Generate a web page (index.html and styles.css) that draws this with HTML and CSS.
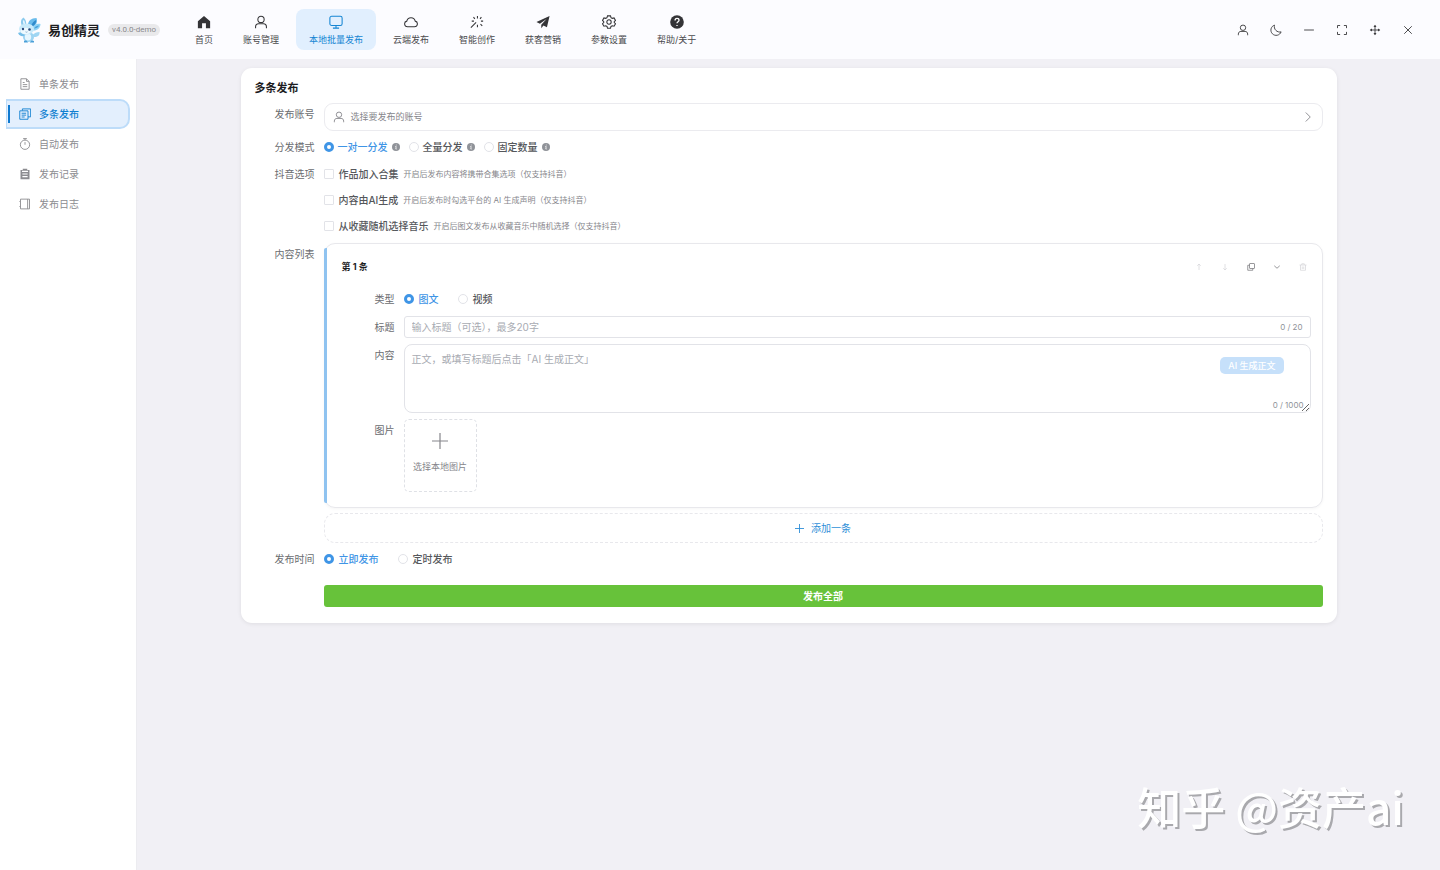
FILE: index.html
```html
<!DOCTYPE html>
<html lang="zh-CN">
<head>
  <meta charset="UTF-8">
  <meta name="viewport" content="width=device-width, initial-scale=1.0">
  <title>易创精灵 - 多条发布</title>
  <link rel="stylesheet" href="styles.css">
</head>
<body>
  <!-- 图标 -->
  <svg class="sprite" aria-hidden="true">
    <symbol id="i-user" viewBox="0 0 16 16"><circle cx="8" cy="5" r="3.6"/><path d="M1.8 15v-1.5c0-2.3 1.4-3.6 3.4-3.6h5.6c2 0 3.4 1.3 3.4 3.6V15"/></symbol>
    <symbol id="i-info" viewBox="0 0 16 16"><circle class="solid" cx="8" cy="8" r="8"/><path class="white" d="M8.600 3.200v1.600M6.500 7h1.900l-.9 5h1.900"/></symbol>
    <symbol id="i-plus" viewBox="0 0 16 16"><path d="M8 0v16M0 8h16"/></symbol>
  </svg>

  <header class="header">
    <div class="brand">
      <svg class="logo" viewBox="0 0 26 28" role="img" aria-label="Logo">
        <path d="M6 10C4 6 5 3 7.500 1.500 10 4 10.500 6 10 9z" fill="#8ccbee"/>
        <path d="M7.500 8C6.500 6 7 4.500 7.500 4 8.800 5 9 6.500 9 8z" fill="#e4f5ff"/>
        <path d="M12 9c0-4 3-7 8.500-7 1.500 4-.5 8-5.500 10z" fill="#6bbcec"/>
        <path d="M15 10c1-3 3-5 5-6 .5 2-.5 4.500-3 6z" fill="#2f8acb"/>
        <path d="M16 13c1.500-4 5-6 8.500-5 0 4-3.500 7-8 6.500z" fill="#8fd3f5"/>
        <path d="M18 12.500c1-2 3-3 5-3-.8 2-2.500 3-5 3z" fill="#4ba4dc"/>
        <path d="M18 21c4 0 6-2 5.500-5-3 0-5 1-7 3z" fill="#9fd6f3"/>
        <ellipse cx="12.500" cy="21" rx="5.500" ry="5" fill="#9dd4f2"/>
        <ellipse cx="12" cy="21" rx="3.200" ry="3.500" fill="#e6f7ff"/>
        <path d="M8 20c-3 .5-5-.5-6-3 2-1.500 5-1 7 1z" fill="#76bfe8"/>
        <ellipse cx="10.500" cy="13" rx="7.500" ry="5.500" fill="#c8eafa"/>
        <ellipse cx="9.500" cy="15" rx="5" ry="3.200" fill="#eefaff"/>
        <circle cx="7" cy="13" r="1.200" fill="#294a7c"/>
        <circle cx="13.500" cy="13.500" r="1.300" fill="#294a7c"/>
        <path d="M9.500 15.800q1 .8 2 0" stroke="#5687b5" stroke-width=".6" fill="none"/>
        <path d="M8 25c1.500-1 3-.5 4 1.500H8zM14 26c1-1.500 2.500-2 4-1v1.500h-4z" fill="#4b9fd8"/>
      </svg>
      <span class="brand-name">易创精灵</span>
      <span class="version">v4.0.0-demo</span>
    </div>
    <nav class="menu">
      <a href="#home"><svg class="icon" viewBox="0 0 16 16"><path class="solid" d="M8 1 1 7v8h4.800V9.500h4.400V15H15V7z"/></svg>首页</a>
      <a href="#account"><svg class="icon"><use href="#i-user"/></svg>账号管理</a>
      <a href="#local" class="active"><svg class="icon" viewBox="0 0 16 16"><rect x="1" y="1.500" width="14" height="10.500" rx="2"/><path d="M8 12v3M4.500 15h7"/></svg>本地批量发布</a>
      <a href="#cloud"><svg class="icon" viewBox="0 0 16 16"><path d="M4 13.500a3.300 3.300 0 0 1-.8-6.500 4.900 4.900 0 0 1 9.600 0 3.300 3.300 0 0 1-.8 6.500z"/></svg>云端发布</a>
      <a href="#ai"><svg class="icon" viewBox="0 0 16 16"><path d="M7 8.500 1 14.500M8.500 1v3M4 2.500l1.500 2M2 7h2.500M13 2.500l-1.500 2M12.500 7H15M12 10.500l2 2M8.500 11v3"/></svg>智能创作</a>
      <a href="#marketing"><svg class="icon" viewBox="0 0 16 16"><path class="solid" d="M15.500 1 .5 8l4 2L12 4.500 6 11v4l2.500-3 4 2z"/></svg>获客营销</a>
      <a href="#settings"><svg class="icon" viewBox="0 0 16 16"><path d="m6.300 1-.6 2-1.400.8-2.100-.5L.6 6.200 2 7.700v.9L.6 10l1.600 2.800 2.100-.5 1.400.8.6 2h3.400l.6-2 1.400-.8 2.100.5 1.600-2.800L14 8.600v-.9l1.400-1.500-1.600-2.900-2.100.5-1.400-.8-.6-2z"/><circle cx="8" cy="8" r="2.500"/></svg>参数设置</a>
      <a href="#help"><svg class="icon" viewBox="0 0 16 16"><circle class="solid" cx="8" cy="8" r="7.800"/><path class="white" d="M5.800 6.300C5.800 3 10.300 3.300 10.300 6c0 1.700-2.300 1.700-2.300 3.500M8 11.300v1.300"/></svg>帮助/关于</a>
    </nav>
    <div class="window-tools">
      <button type="button" aria-label="用户"><svg class="icon"><use href="#i-user"/></svg></button>
      <button type="button" aria-label="深色模式"><svg class="icon" viewBox="0 0 16 16"><path d="M6 1.500a7 7 0 1 0 8.800 9A7.300 7.300 0 0 1 6 1.500z"/></svg></button>
      <button type="button" aria-label="最小化"><svg class="icon" viewBox="0 0 16 16"><path d="M1.500 8h13"/></svg></button>
      <button type="button" aria-label="全屏"><svg class="icon" viewBox="0 0 16 16"><path d="M2 5.500V2h3.500M10.500 2H14v3.500M14 10.500V14h-3.500M5.500 14H2v-3.500"/></svg></button>
      <button type="button" aria-label="移动"><svg class="icon" viewBox="0 0 16 16"><path d="M8 2v12M2 8h12"/><path class="solid" d="m8 1 2 3H6zM8 15l-2-3h4zM1 8l3-2v4zM15 8l-3 2V6z"/></svg></button>
      <button type="button" aria-label="关闭"><svg class="icon" viewBox="0 0 16 16"><path d="m3 3 10 10M13 3 3 13"/></svg></button>
    </div>
  </header>

  <div class="layout">
    <aside class="sidebar">
      <a href="#single"><svg class="icon" viewBox="0 0 16 16"><path d="M2.500 1h7.500l3.500 3.500V15h-11zM10 1v3.500h3.500M5 6h2.500M5 8.800h6M5 11.500h6"/></svg>单条发布</a>
      <a href="#multi" class="active"><svg class="icon" viewBox="0 0 16 16"><path d="M4.500 3.500V1.200h11v10.600H12M1 3.800h11V15H1zM3.500 7h6M3.500 9.500h6M3.500 12h4"/></svg>多条发布</a>
      <a href="#auto"><svg class="icon" viewBox="0 0 16 16"><circle cx="8" cy="9" r="6.200"/><path d="M8 5.500V9M5.500.8h5M8 .8v2"/></svg>自动发布</a>
      <a href="#record"><svg class="icon" viewBox="0 0 16 16"><path class="solid" d="M2 2.500h3V1h6v1.500h3V15H2z"/><path class="white" d="M4 4.500h8M4.500 8h7M4.500 11.500h7"/></svg>发布记录</a>
      <a href="#log"><svg class="icon" viewBox="0 0 16 16"><path d="M2 1.500h12v13H2zM11.500 1.500v13M1 4v1M1 11v1"/></svg>发布日志</a>
    </aside>

    <main class="main">
      <form class="card">
        <h1 class="card-title">多条发布</h1>
        <div class="row">
          <label class="label" for="account">发布账号</label>
          <button type="button" id="account" class="account">
            <svg class="icon"><use href="#i-user"/></svg>
            <span>选择要发布的账号</span>
            <svg class="icon arrow" viewBox="0 0 16 16"><path d="m5 2 6 6-6 6"/></svg>
          </button>
        </div>
        <div class="row">
          <span class="label">分发模式</span>
          <div class="choices modes">
            <label class="choice"><input type="radio" name="mode" checked><span>一对一分发</span><svg class="info"><use href="#i-info"/></svg></label>
            <label class="choice"><input type="radio" name="mode"><span>全量分发</span><svg class="info"><use href="#i-info"/></svg></label>
            <label class="choice"><input type="radio" name="mode"><span>固定数量</span><svg class="info"><use href="#i-info"/></svg></label>
          </div>
        </div>
        <div class="row">
          <span class="label">抖音选项</span>
          <div class="options">
            <label class="choice"><input type="checkbox"><span>作品加入合集</span><small>开启后发布内容将携带合集选项（仅支持抖音）</small></label>
            <label class="choice"><input type="checkbox"><span>内容由AI生成</span><small>开启后发布时勾选平台的 AI 生成声明（仅支持抖音）</small></label>
            <label class="choice"><input type="checkbox"><span>从收藏随机选择音乐</span><small>开启后图文发布从收藏音乐中随机选择（仅支持抖音）</small></label>
          </div>
        </div>
        <div class="row">
          <span class="label">内容列表</span>
          <div class="list">
            <section class="item">
              <div class="item-head">
                <h2>第 1 条</h2>
                <div class="item-tools">
                  <button type="button" aria-label="上移" disabled><svg class="icon" viewBox="0 0 16 16"><path d="M8 14V2M4.500 5.500 8 2l3.500 3.500"/></svg></button>
                  <button type="button" aria-label="下移" disabled><svg class="icon" viewBox="0 0 16 16"><path d="M8 2v12M4.500 10.500 8 14l3.500-3.500"/></svg></button>
                  <button type="button" aria-label="复制"><svg class="icon" viewBox="0 0 16 16"><rect x="5" y="1" width="10" height="10" rx="1"/><path d="M5 4.500H1.500v10h10V11"/></svg></button>
                  <button type="button" aria-label="收起"><svg class="icon" viewBox="0 0 16 16"><path d="m2.500 5.500 5.500 5 5.500-5"/></svg></button>
                  <button type="button" aria-label="删除" disabled><svg class="icon" viewBox="0 0 16 16"><path d="M1 4h14M5.500 4V1.500h5V4M3 4v10.500h10V4M6.500 7v5M9.500 7v5"/></svg></button>
                </div>
              </div>
              <div class="item-body">
                <div class="row">
                  <span class="label">类型</span>
                  <div class="choices">
                    <label class="choice"><input type="radio" name="type" checked><span>图文</span></label>
                    <label class="choice"><input type="radio" name="type"><span>视频</span></label>
                  </div>
                </div>
                <div class="row">
                  <label class="label" for="title">标题</label>
                  <div class="input-box">
                    <input type="text" id="title" placeholder="输入标题（可选），最多20字">
                    <span class="count">0 / 20</span>
                  </div>
                </div>
                <div class="row">
                  <label class="label" for="content">内容</label>
                  <div class="textarea-box">
                    <textarea id="content" placeholder="正文，或填写标题后点击「AI 生成正文」"></textarea>
                    <button type="button" class="ai-btn" disabled>AI 生成正文</button>
                    <span class="count">0 / 1000</span>
                  </div>
                </div>
                <div class="row">
                  <span class="label">图片</span>
                  <button type="button" class="upload"><svg class="plus"><use href="#i-plus"/></svg>选择本地图片</button>
                </div>
              </div>
            </section>
            <button type="button" class="add-btn"><svg class="plus"><use href="#i-plus"/></svg>添加一条</button>
          </div>
        </div>
        <div class="row">
          <span class="label">发布时间</span>
          <div class="choices">
            <label class="choice"><input type="radio" name="time" checked><span>立即发布</span></label>
            <label class="choice"><input type="radio" name="time"><span>定时发布</span></label>
          </div>
        </div>
        <div class="row submit-row">
          <button type="submit" class="submit">发布全部</button>
        </div>
      </form>
    </main>
  </div>
  <div class="watermark">知乎 @资产ai</div>
</body>
</html>
```
FILE: styles.css
```css
* {
  box-sizing: border-box;
}
body {
  margin: 0;
  min-height: 100vh;
  display: flex;
  flex-direction: column;
  font-family: Inter, 'Noto Sans CJK SC', sans-serif;
  font-size: 10px;
  line-height: 22px;
  color: #6a6c70;
  background: #f1f0f5; /* 页面主背景色 */
}
button, input, textarea {
  font: inherit;
  color: inherit;
  margin: 0;
}
button {
  padding: 0;
  border: none;
  background: none;
  cursor: pointer;
}
a {
  color: inherit;
  text-decoration: none;
}
.sprite {
  display: none;
}
.icon, .info, .plus {
  flex: none;
  width: 12px;
  height: 12px;
  fill: none;
  stroke: currentColor;
  stroke-width: 1.2;
}
.solid {
  fill: currentColor;
  stroke: none;
}
.white {
  stroke: #fff;
  stroke-width: 1.5;
}

/* 顶部导航 */
.header {
  display: flex;
  align-items: center;
  height: 59px;
  padding: 0 16px;
  background: #fcfcff;
}
.brand {
  display: flex;
  align-items: center;
  width: 166px;
}
.logo {
  width: 26px;
  height: 28px;
}
.brand-name {
  margin-left: 6px;
  font-size: 13px;
  font-weight: 700;
  color: #1d1d1f;
}
.version {
  margin-left: 8px;
  padding: 0 4px;
  border-radius: 6px;
  font-family: Roboto, sans-serif;
  font-size: 8px;
  line-height: 12px;
  color: #8a8a8e;
  background: #e9e9eb;
}
.menu {
  display: flex;
  gap: 4px;
}
.menu a {
  display: flex;
  flex-direction: column;
  align-items: center;
  gap: 4px;
  height: 41px;
  padding: 6px 13px 0;
  border-radius: 8px;
  font-size: 9px;
  line-height: 14px;
  color: #4a4a4d;
}
.menu .icon {
  width: 14px;
  height: 14px;
  color: #343437;
}
.menu a.active, .menu .active .icon {
  color: #1485d3;
}
.menu a.active {
  background: #e1effe; /* 选中项浅蓝色背景 */
}
.window-tools {
  display: flex;
  margin-left: auto;
}
.window-tools button {
  display: flex;
  align-items: center;
  justify-content: center;
  width: 33px;
  height: 32px;
  color: #3a3a3c;
}

/* 侧边栏 */
.layout {
  flex: 1;
  display: flex;
}
.sidebar {
  flex: none;
  width: 137px;
  padding: 10px 6px;
  border-right: 1px solid #ececf0;
  background: #fff;
}
.sidebar a {
  display: flex;
  align-items: center;
  gap: 8px;
  height: 30px;
  padding-left: 13px;
  color: #8c8c90;
}
.sidebar a.active {
  position: relative;
  padding-left: 12px;
  border: 2px solid #bddcf9;
  border-left-width: 1px;
  border-radius: 0 10px 10px 0;
  font-weight: 500;
  color: #0f7fd0;
  background: #e3effd;
}
.sidebar a.active::before {
  content: '';
  position: absolute;
  left: 1px;
  top: 4px;
  bottom: 4px;
  width: 2px;
  background: #0f7ad0;
}

/* 表单卡片 */
.main {
  flex: 1;
  padding: 9px 24px;
}
.card {
  display: flex;
  flex-direction: column;
  gap: 5px;
  max-width: 1096px;
  margin: 0 auto;
  padding: 10px 14px 16px;
  border-radius: 11px;
  background: #fff;
  box-shadow: 0 1px 4px rgba(0,0,0,0.08);
}
.card-title {
  margin: 0;
  font-size: 11px;
  line-height: 20px;
  font-weight: 700;
  color: #1d1d1f;
}
.row {
  display: grid;
  grid-template-columns: 60px minmax(0, 1fr);
  column-gap: 9px;
}
.label {
  text-align: right;
}
.account {
  display: flex;
  align-items: center;
  gap: 6px;
  height: 28px;
  padding: 0 8px;
  border: 1px solid #ebebef;
  border-radius: 9px;
  font-size: 9px;
  color: #86868b;
}
.account .arrow {
  margin-left: auto;
}
.choices {
  display: flex;
  gap: 19px;
}
.modes {
  gap: 9px;
}
.choice {
  display: flex;
  align-items: center;
  gap: 5px;
  font-weight: 500;
  color: #55575b;
}
.choice input {
  appearance: none;
  flex: none;
  width: 10px;
  height: 10px;
  border: 1px solid #e2e3e8;
  border-radius: 1px;
  background: #fff;
}
.choice input[type="radio"] {
  border-radius: 50%;
}
.choice input:checked {
  border: 3px solid #3f95e6;
}
.choice input:checked + span {
  color: #3f95e6;
}
.choice small {
  font-size: 8px;
  font-weight: 400;
  color: #86868b;
}
.info {
  width: 8px;
  height: 8px;
  color: #909399;
}
.modes .choice {
  gap: 4px;
}
.options {
  display: grid;
  gap: 4px;
  padding-bottom: 1px;
}

/* 内容列表 */
.list {
  display: grid;
  gap: 5px;
}
.item {
  position: relative;
  padding: 12px 11px 15px 17px;
  border: 1px solid #e8e8ec;
  border-radius: 11px;
  box-shadow: 0 1px 3px rgba(0,0,0,0.04);
}
/* 左侧蓝色标记 */
.item::before {
  content: '';
  position: absolute;
  left: -1px;
  top: 4px;
  bottom: 4px;
  width: 3px;
  border-radius: 2px 0 0 2px;
  background: #8fc3f0;
}
.item-head {
  display: flex;
  justify-content: space-between;
  align-items: center;
}
.item-head h2 {
  margin: 0;
  font-size: 9px;
  font-weight: 700;
  color: #1d1d1f;
}
.item-tools {
  display: flex;
  margin-right: -5px;
}
.item-tools button {
  display: flex;
  align-items: center;
  justify-content: center;
  width: 26px;
  height: 22px;
  color: #77777b;
}
.item-tools button:disabled {
  color: #d5d5d9;
}
.item-tools .icon {
  width: 8px;
  height: 8px;
  stroke-width: 1.5;
}
.item-body {
  display: grid;
  gap: 6px;
  padding-top: 10px;
}
.item-body .row {
  grid-template-columns: 53px minmax(0, 1fr);
}
.input-box {
  display: flex;
  height: 22px;
  padding: 0 7px;
  border: 1px solid #e2e3e8;
  border-radius: 3px;
  line-height: 20px;
}
.input-box input {
  flex: 1;
  padding: 0;
  border: none;
  outline: none;
  background: none;
}
::placeholder {
  color: #a8abb2;
  opacity: 1;
}
.count {
  font-size: 8px;
  color: #909399;
}
.textarea-box {
  position: relative;
}
.textarea-box textarea {
  display: block;
  width: 100%;
  height: 69px;
  padding: 3px 7px;
  border: 1px solid #e2e3e8;
  border-radius: 8px;
  outline: none;
  resize: vertical;
}
.textarea-box .count {
  position: absolute;
  right: 7px;
  bottom: 2px;
  line-height: 12px;
}
.ai-btn {
  position: absolute;
  top: 13px;
  right: 27px;
  padding: 0 8px;
  border-radius: 5px;
  font-size: 9px;
  line-height: 17px;
  font-weight: 500;
  color: #fff;
  background: #c6e0fa;
}
.upload {
  display: flex;
  flex-direction: column;
  align-items: center;
  justify-content: center;
  gap: 7px;
  width: 73px;
  height: 73px;
  border: 1px dashed #dfe1e6;
  border-radius: 5px;
  font-size: 9px;
  color: #86868b;
}
.upload .plus {
  width: 16px;
  height: 16px;
}
.add-btn {
  display: flex;
  align-items: center;
  justify-content: center;
  gap: 7px;
  height: 30px;
  border: 1px dashed #e8e8ec;
  border-radius: 11px;
  color: #2f8fd8;
}
.add-btn .plus {
  width: 9px;
  height: 9px;
  stroke-width: 1.6;
}
.submit-row {
  padding-top: 10px;
}
.submit {
  grid-column: 2;
  height: 22px;
  border-radius: 3px;
  font-weight: 700;
  color: #fff;
  background: #67c23a; /* 提交按钮绿色 */
}

/* 右下角水印 */
.watermark {
  position: fixed;
  right: 36px;
  bottom: 32px;
  font-family: 'Noto Sans CJK SC', sans-serif;
  font-size: 44px;
  line-height: 64px;
  font-weight: 500;
  color: #fff;
  text-shadow: 2px 2px 0 #a9a9ad;
  pointer-events: none;
}
```
